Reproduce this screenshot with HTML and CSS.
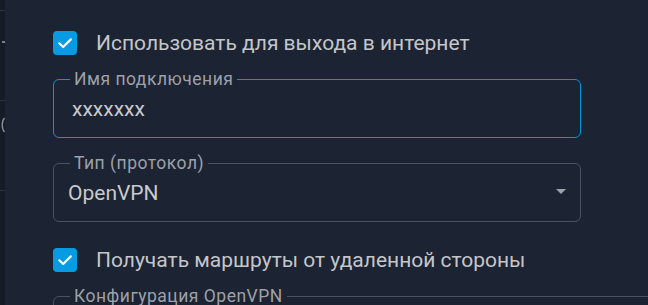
FILE: index.html
```html
<!DOCTYPE html>
<html lang="ru">
<head>
<meta charset="utf-8">
<link rel="stylesheet" href="styles.css">
</head>
<body>
<div class="app">
  <aside class="strip">
    <div class="strip-line l1"></div>
    <div class="strip-dot"></div>
    <div class="strip-line l2"></div>
    <svg class="strip-glyph" width="5" height="16" viewBox="0 0 5 16"><path d="M4.5 1 C1.5 4 1.5 12 4.5 15" fill="none" stroke="#8a8f98" stroke-width="1.4"/></svg>
    <div class="strip-line l3"></div>
  </aside>
  <main class="panel">
    <label class="check-row first">
      <span class="checkbox"><svg width="24" height="24" viewBox="0 0 24 24"><path d="M6.3 12.3 L10.2 16 L17.8 8.4" fill="none" stroke="#fff" stroke-width="2.2" stroke-linecap="round" stroke-linejoin="round"/></svg></span>
      <span class="check-text">Использовать для выхода в интернет</span>
    </label>

    <fieldset class="field focused">
      <legend>Имя подключения</legend>
      <div class="value input-value">xxxxxxx</div>
    </fieldset>

    <fieldset class="field second">
      <legend>Тип (протокол)</legend>
      <div class="select-row">
        <div class="value select-value">OpenVPN</div>
        <span class="arrow"></span>
      </div>
    </fieldset>

    <label class="check-row second-check">
      <span class="checkbox"><svg width="24" height="24" viewBox="0 0 24 24"><path d="M6.3 12.3 L10.2 16 L17.8 8.4" fill="none" stroke="#fff" stroke-width="2.2" stroke-linecap="round" stroke-linejoin="round"/></svg></span>
      <span class="check-text">Получать маршруты от удаленной стороны</span>
    </label>

    <fieldset class="field third">
      <legend>Конфигурация OpenVPN</legend>
      <div class="value">&nbsp;</div>
    </fieldset>
  </main>
</div>
</body>
</html>
```

FILE: styles.css
```css
html, body {
  margin: 0;
  padding: 0;
  height: 305px;
  overflow: hidden;
  background: #1c2333;
  font-family: Roboto, "Noto Sans", Arial, sans-serif;
}

.app {
  display: flex;
  height: 305px;
  overflow: hidden;
}

.strip {
  width: 5px;
  flex: none;
  background: #161b27;
  display: flex;
  flex-direction: column;
}

.strip-line {
  height: 1px;
  background: #2c323f;
}
.strip-line.l1 { margin-top: 10px; }
.strip-dot {
  width: 3px;
  height: 2px;
  margin: 30px 0 0 2px;
  background: #7c818a;
}
.strip-line.l2 { margin-top: 57px; }
.strip-glyph { margin-top: 16px; display: block; }
.strip-line.l3 { margin-top: 57px; }

.panel {
  flex: 1;
  min-width: 0;
  padding: 0 67px 0 48px;
}

.check-row {
  display: flex;
  align-items: center;
  height: 24px;
}
.check-row.first { margin-top: 31px; }
.check-row.second-check { margin-top: 26px; }

.checkbox {
  width: 24px;
  height: 24px;
  border-radius: 4px;
  background: #069be2;
  flex: none;
}
.checkbox svg { display: block; }

.check-text {
  margin-left: 19px;
  font-size: 21px;
  color: #c4c6ca;
  line-height: 24px;
  white-space: nowrap;
}

.field {
  margin: 14px 0 0 0;
  padding: 0;
  border: 1px solid #4a5160;
  border-radius: 6px;
  min-width: 0;
}
.field.focused { border-color: #0696dc; }
.field.second { margin-top: 15px; }
.field.third { margin-right: -120px; }

.field legend {
  margin-left: 16px;
  padding: 0 4px;
  font-size: 17.5px;
  letter-spacing: 0.5px;
  line-height: 20px;
  color: #9da1a9;
}

.value {
  height: 48px;
  box-sizing: border-box;
  padding-top: 8px;
  font-size: 21px;
  line-height: 25px;
  color: #c9cacd;
}
.input-value { padding-left: 18px; }

.select-row {
  display: flex;
  align-items: flex-start;
  justify-content: space-between;
}
.select-value { padding-left: 14px; }

.arrow {
  width: 0;
  height: 0;
  margin: 16px 14px 0 0;
  border-left: 5px solid transparent;
  border-right: 5px solid transparent;
  border-top: 5px solid #9da1a9;
}
```
